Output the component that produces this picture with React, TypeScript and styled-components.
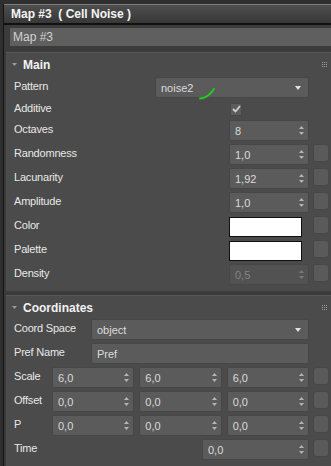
import styled, { createGlobalStyle } from "styled-components";

const GlobalStyle = createGlobalStyle`
  html, body {
    margin: 0;
    padding: 0;
    background: #3b3b3b;
  }
  body {
    font-family: "Liberation Sans", Arial, sans-serif;
    font-size: 11px;
    color: #e4e4e4;
  }
`;

const Page = styled.div`
  width: 331px;
  height: 466px;
  overflow: hidden;
  display: flex;
  flex-direction: column;
  background: #3b3b3b;
`;

const TopStrip = styled.div`
  height: 4px;
  flex-shrink: 0;
  background: #2f2f2f;
`;

const Body = styled.div`
  flex: 1;
  display: flex;
  min-height: 0;
`;

const Rail = styled.div`
  width: 3px;
  flex-shrink: 0;
  background: #2f2f2f;
  border-right: 1px solid #141414;
`;

const Content = styled.div`
  flex: 1;
  min-width: 0;
  display: flex;
  flex-direction: column;
`;

const TitleBar = styled.div`
  height: 18px;
  flex-shrink: 0;
  display: flex;
  align-items: center;
  padding-left: 7px;
  border-top: 1px solid #7e7e7e;
  border-bottom: 2px solid #111111;
  background: linear-gradient(#4e4e4e, #383838);
  font-size: 12px;
  font-weight: bold;
  color: #f4f4f4;
  white-space: pre;
`;

const NameArea = styled.div`
  padding: 3px 0 6px 6px;
  flex-shrink: 0;
`;

const NameField = styled.div`
  height: 18px;
  display: flex;
  align-items: center;
  padding-left: 3px;
  background: #5f5f5f;
  font-size: 12px;
  color: #d2d2d2;
`;

const Panel = styled.section<{ $grow?: boolean }>`
  margin-left: 2px;
  margin-bottom: 4px;
  background: #4b4b4b;
  border-top: 1px solid #575757;
  flex-shrink: 0;
  ${({ $grow }) => ($grow ? "flex: 1;" : "")}
`;

const Header = styled.div`
  height: 23px;
  display: flex;
  align-items: center;
  padding: 0 4px 0 6px;
  gap: 6px;
  font-size: 12px;
  font-weight: bold;
  color: #f2f2f2;

  .grip {
    margin-left: auto;
  }
`;

const Rows = styled.div<{ $top: number }>`
  display: flex;
  flex-direction: column;
  gap: 3px;
  padding: ${({ $top }) => $top}px 2px 6px 8px;
`;

const Row = styled.div<{ $h?: number }>`
  display: flex;
  align-items: center;
  height: ${({ $h }) => $h ?? 21}px;
`;

const Label = styled.div`
  flex: 1;
  min-width: 0;
  white-space: nowrap;
  padding-bottom: 3px;
  letter-spacing: -0.2px;
  color: #e8e8e8;
`;

const Control = styled.div<{ $w: number }>`
  width: ${({ $w }) => $w}px;
  height: 100%;
  display: flex;
  align-items: center;
  gap: 5px;
`;

const SideButton = styled.div<{ $hidden?: boolean }>`
  width: 16px;
  height: 18px;
  margin-left: 4px;
  align-self: flex-start;
  box-sizing: border-box;
  border-radius: 3px;
  background: #5a5a5a;
  border: 1px solid #474747;
  visibility: ${({ $hidden }) => ($hidden ? "hidden" : "visible")};
`;

const Field = styled.div<{ $disabled?: boolean }>`
  position: relative;
  flex: 1;
  height: 100%;
  box-sizing: border-box;
  display: flex;
  align-items: center;
  padding: 0 4px 0 5px;
  border: 1px solid #474747;
  border-radius: 2px;
  background: ${({ $disabled }) => ($disabled ? "#525252" : "#5b5b5b")};
  color: ${({ $disabled }) => ($disabled ? "#858585" : "#dcdcdc")};

  svg.end {
    margin-left: auto;
  }
`;

const Checkbox = styled.div`
  width: 12px;
  height: 13px;
  margin-left: 1px;
  box-sizing: border-box;
  display: flex;
  align-items: center;
  justify-content: center;
  background: #5c5c5c;
  border: 1px solid #474747;
`;

const Swatch = styled.div`
  width: 73px;
  height: 20px;
  box-sizing: border-box;
  background: #ffffff;
  border: 1px solid #101010;
`;

const Squiggle = styled.svg`
  position: absolute;
  left: 43px;
  top: 8px;
`;

function Grip() {
  const dots = [];
  for (let y = 0; y < 3; y++)
    for (let x = 0; x < 3; x++)
      dots.push(<rect key={`${x}-${y}`} x={x * 2} y={y * 2} width="1" height="1" />);
  return (
    <svg className="grip" width="5" height="5" fill="#9c9c9c">
      {dots}
    </svg>
  );
}

function Rollout({ title, top, grow, children }: { title: string; top: number; grow?: boolean; children: React.ReactNode }) {
  return (
    <Panel $grow={grow}>
      <Header>
        <svg width="5" height="3" fill="#9a9a9a">
          <polygon points="0,0 5,0 2.5,3" />
        </svg>
        {title}
        <Grip />
      </Header>
      <Rows $top={top}>{children}</Rows>
    </Panel>
  );
}

function Spinner({ value, disabled }: { value: string; disabled?: boolean }) {
  return (
    <Field $disabled={disabled}>
      {value}
      <svg className="end" width="5" height="9" fill={disabled ? "#7a7a7a" : "#b4b4b4"}>
        <polygon points="0,3 2.5,0 5,3" />
        <polygon points="0,6 5,6 2.5,9" />
      </svg>
    </Field>
  );
}

function Dropdown({ value, children }: { value: string; children?: React.ReactNode }) {
  return (
    <Field>
      {value}
      <svg className="end" width="6" height="4" fill="#e2e2e2" style={{ marginRight: 3 }}>
        <polygon points="0,0 6,0 3,4" />
      </svg>
      {children}
    </Field>
  );
}

type ParamProps = {
  label: string;
  w: number;
  button?: boolean;
  h?: number;
  children: React.ReactNode;
};

function Param({ label, w, button, h, children }: ParamProps) {
  return (
    <Row $h={h}>
      <Label>{label}</Label>
      <Control $w={w}>{children}</Control>
      <SideButton $hidden={!button} />
    </Row>
  );
}

export default function App() {
  return (
    <>
      <GlobalStyle />
      <Page>
        <TopStrip />
        <Body>
          <Rail />
          <Content>
            <TitleBar>{"Map #3  ( Cell Noise )"}</TitleBar>
            <NameArea>
              <NameField>Map #3</NameField>
            </NameArea>

            <Rollout title="Main" top={1}>
              <Param label="Pattern" w={154}>
                <Dropdown value="noise2">
                  <Squiggle width="17" height="14">
                    <path d="M1,12.5 C6,12.5 11,9 15,3" stroke="#1fd21f" strokeWidth="1.8" fill="none" strokeLinecap="round" />
                  </Squiggle>
                </Dropdown>
              </Param>
              <Param label="Additive" w={80} h={16}>
                <Checkbox>
                  <svg width="9" height="8">
                    <path d="M1,4 L3.5,6.5 L8,1" stroke="#d0d0d0" strokeWidth="1.8" fill="none" />
                  </svg>
                </Checkbox>
              </Param>
              <Param label="Octaves" w={80}>
                <Spinner value="8" />
              </Param>
              <Param label="Randomness" w={80} button>
                <Spinner value="1,0" />
              </Param>
              <Param label="Lacunarity" w={80} button>
                <Spinner value="1,92" />
              </Param>
              <Param label="Amplitude" w={80} button>
                <Spinner value="1,0" />
              </Param>
              <Param label="Color" w={80} button>
                <Swatch />
              </Param>
              <Param label="Palette" w={80} button>
                <Swatch />
              </Param>
              <Param label="Density" w={80} button>
                <Spinner value="0,5" disabled />
              </Param>
            </Rollout>

            <Rollout title="Coordinates" top={0} grow>
              <Param label="Coord Space" w={218}>
                <Dropdown value="object" />
              </Param>
              <Param label="Pref Name" w={218}>
                <Field>Pref</Field>
              </Param>
              <Param label="Scale" w={257} button>
                <Spinner value="6,0" />
                <Spinner value="6,0" />
                <Spinner value="6,0" />
              </Param>
              <Param label="Offset" w={257} button>
                <Spinner value="0,0" />
                <Spinner value="0,0" />
                <Spinner value="0,0" />
              </Param>
              <Param label="P" w={257} button>
                <Spinner value="0,0" />
                <Spinner value="0,0" />
                <Spinner value="0,0" />
              </Param>
              <Param label="Time" w={107} button>
                <Spinner value="0,0" />
              </Param>
            </Rollout>
          </Content>
        </Body>
      </Page>
    </>
  );
}
